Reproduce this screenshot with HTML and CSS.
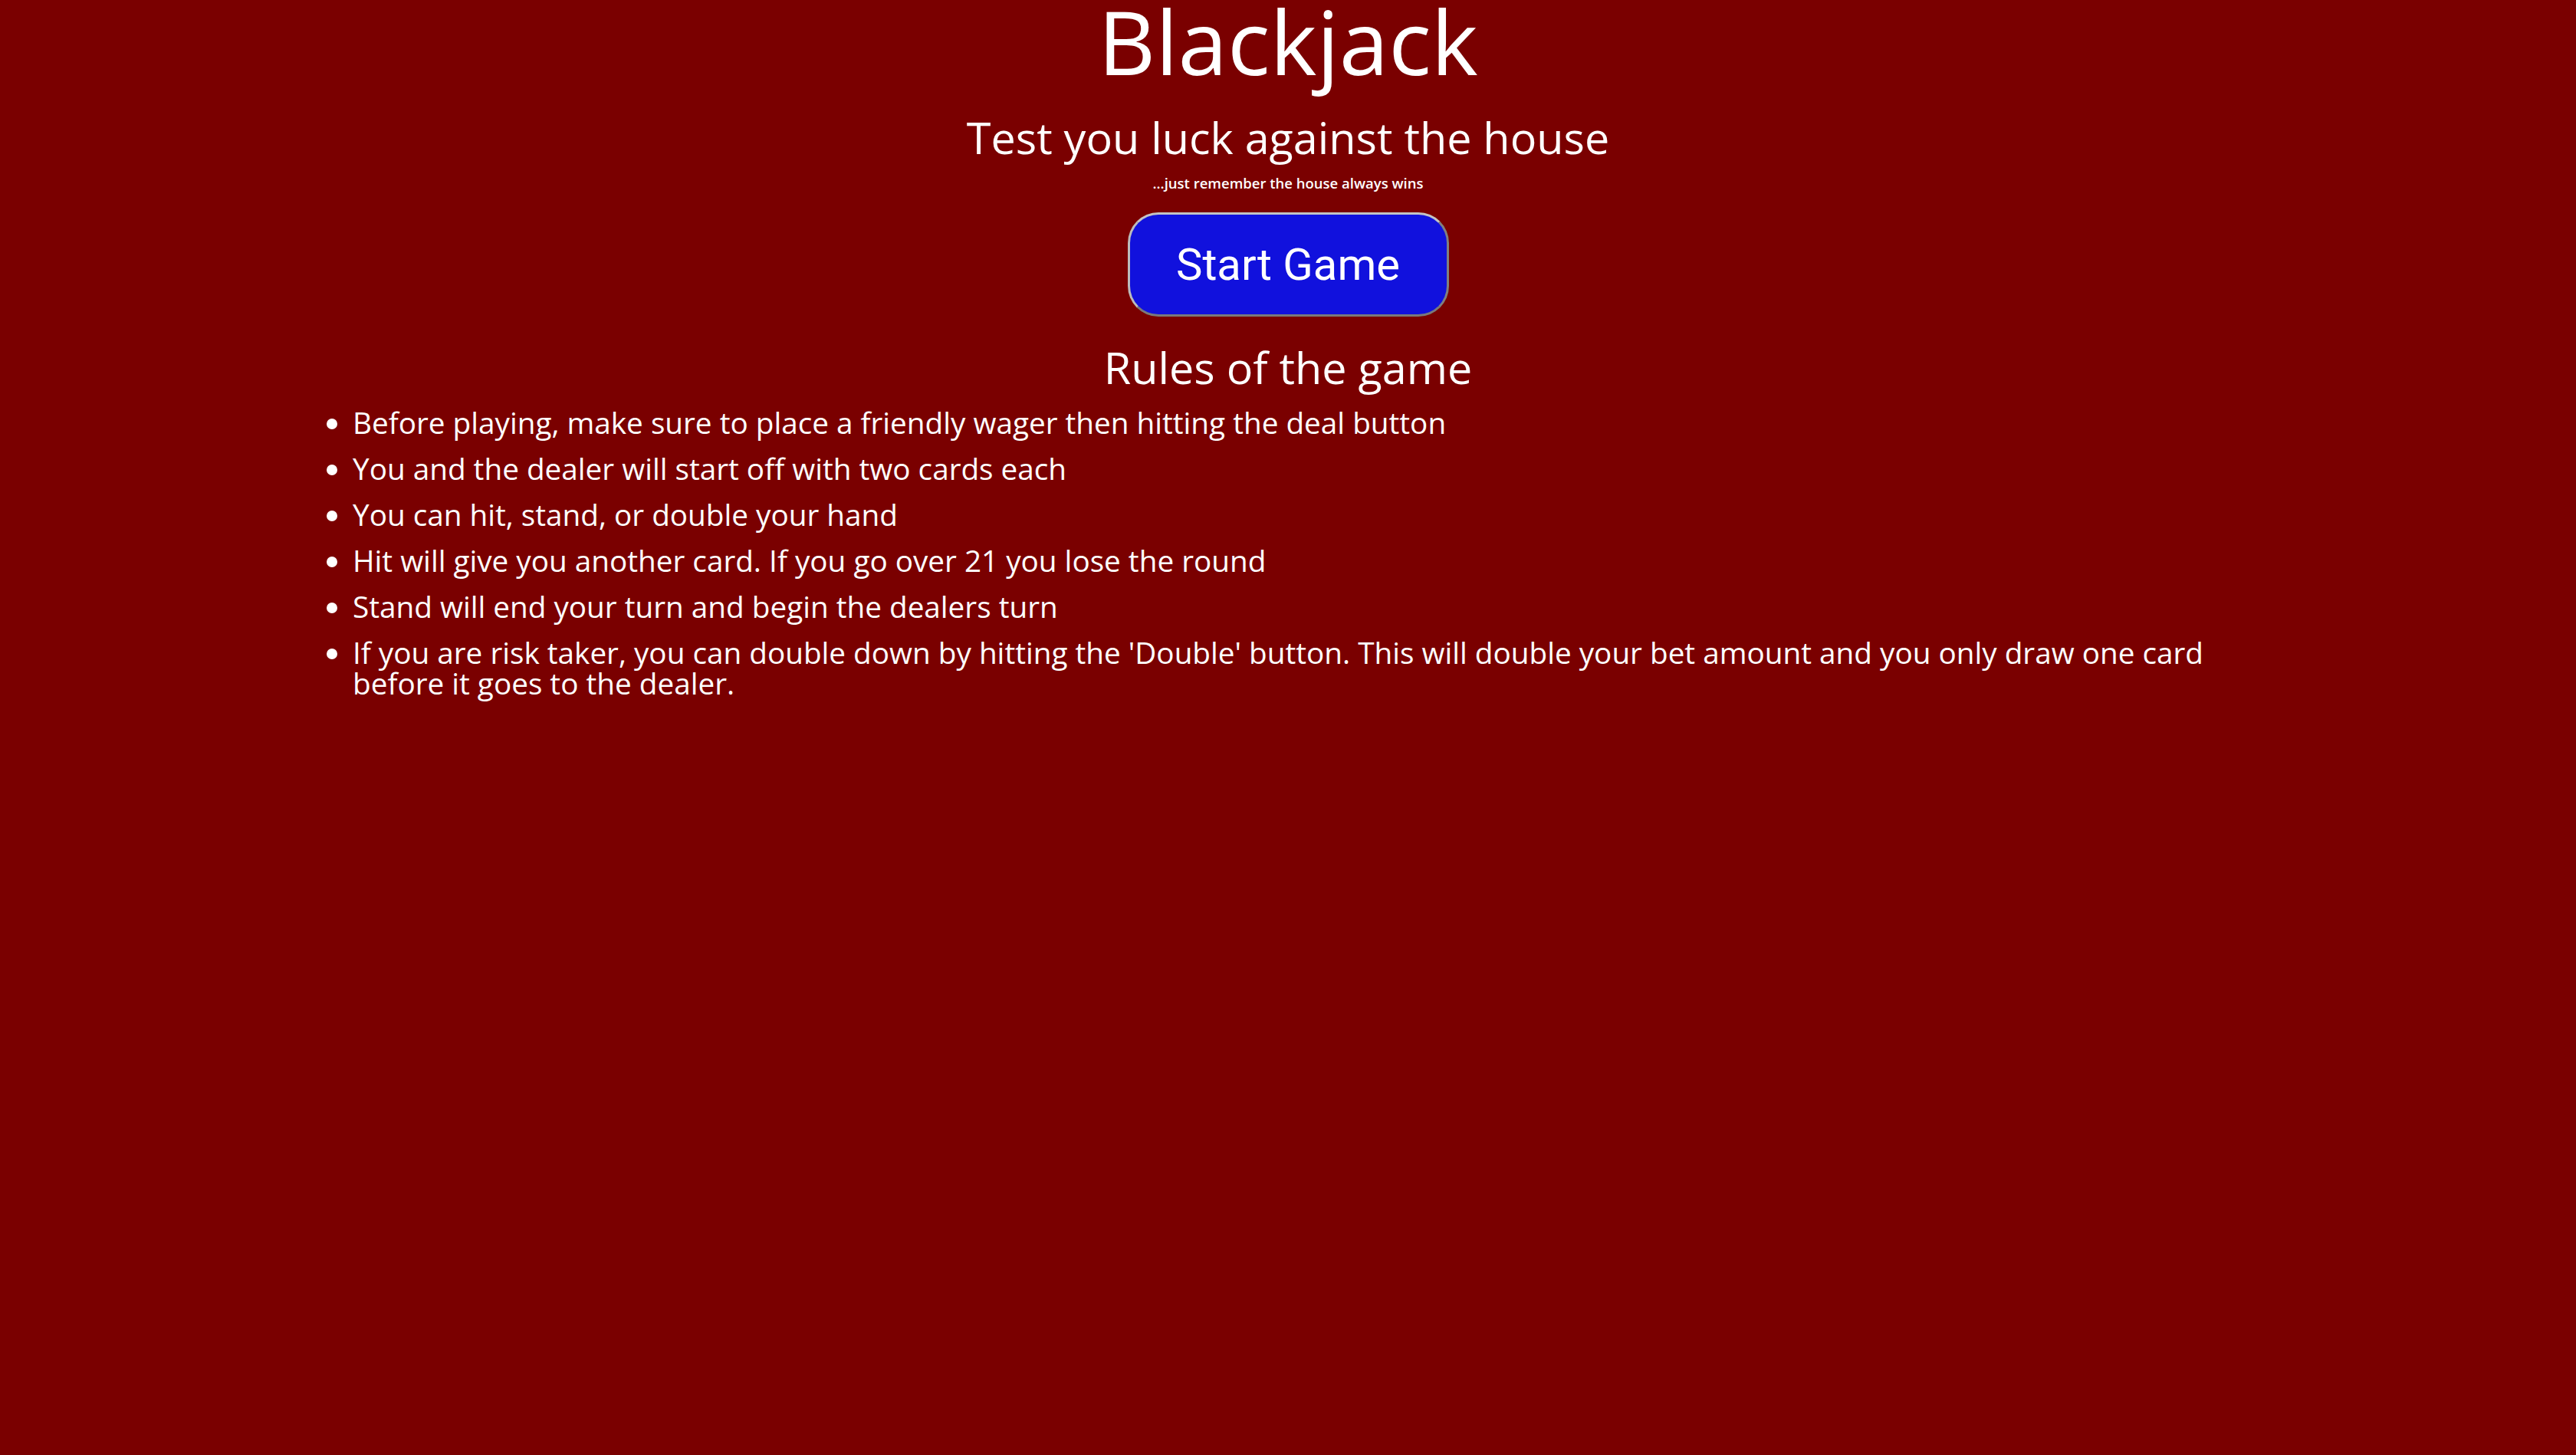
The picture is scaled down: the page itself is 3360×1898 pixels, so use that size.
FILE: index.html
```html
<!DOCTYPE html>
<html lang="en">
<head>
<meta charset="utf-8">
<title>Blackjack</title>
<link rel="stylesheet" href="styles.css">
</head>
<body>
<main class="page">
  <header class="intro">
    <h1 class="title">Blackjack</h1>
    <h2 class="subtitle">Test you luck against the house</h2>
    <p class="tagline">...just remember the house always wins</p>
    <button class="start-btn" type="button">Start Game</button>
  </header>
  <section class="rules">
    <h2 class="rules-title">Rules of the game</h2>
    <ul class="rules-list">
      <li>Before playing, make sure to place a friendly wager then hitting the deal button</li>
      <li>You and the dealer will start off with two cards each</li>
      <li>You can hit, stand, or double your hand</li>
      <li>Hit will give you another card. If you go over 21 you lose the round</li>
      <li>Stand will end your turn and begin the dealers turn</li>
      <li>If you are risk taker, you can double down by hitting the 'Double' button. This will double your bet amount and you only draw one card before it goes to the dealer.</li>
    </ul>
  </section>
</main>
</body>
</html>
```

FILE: styles.css
```css
html, body {
  margin: 0;
  padding: 0;
}

body {
  background: #7a0000;
  color: #ffffff;
  font-family: "Open Sans", "DejaVu Sans", sans-serif;
  min-height: 100vh;
}

.page {
  width: 75%;
  margin: 0 auto;
}

.intro {
  display: flex;
  flex-direction: column;
  align-items: center;
}

.title {
  margin: 0;
  font-size: 116px;
  font-weight: 400;
  line-height: 106px;
}

.subtitle {
  margin: 38.4px 0 0;
  font-size: 57.5px;
  font-weight: 500;
  line-height: 70px;
}

.tagline {
  margin: 12.4px 0 0;
  font-size: 18.5px;
  font-weight: 600;
  line-height: 24px;
}

.start-btn {
  margin-top: 26.2px;
  box-sizing: border-box;
  width: 419px;
  height: 136px;
  padding: 0;
  background: #1111dd;
  color: #ffffff;
  font-family: Roboto, "Liberation Sans", sans-serif;
  font-size: 58px;
  font-weight: 400;
  border-radius: 40px;
  border-style: solid;
  border-width: 3px;
  border-top-color: #c4c4c4;
  border-left-color: #bcbcbc;
  border-right-color: #808080;
  border-bottom-color: #7a7a7a;
  cursor: pointer;
}

.rules-title {
  margin: 31.4px 0 0;
  text-align: center;
  font-size: 57.5px;
  font-weight: 500;
  line-height: 70px;
}

.rules-list {
  margin: 16.4px 0 0;
  padding-left: 40px;
  font-size: 38.7px;
  font-weight: 500;
  line-height: 40.5px;
}

.rules-list li {
  margin-bottom: 19.5px;
}
```
